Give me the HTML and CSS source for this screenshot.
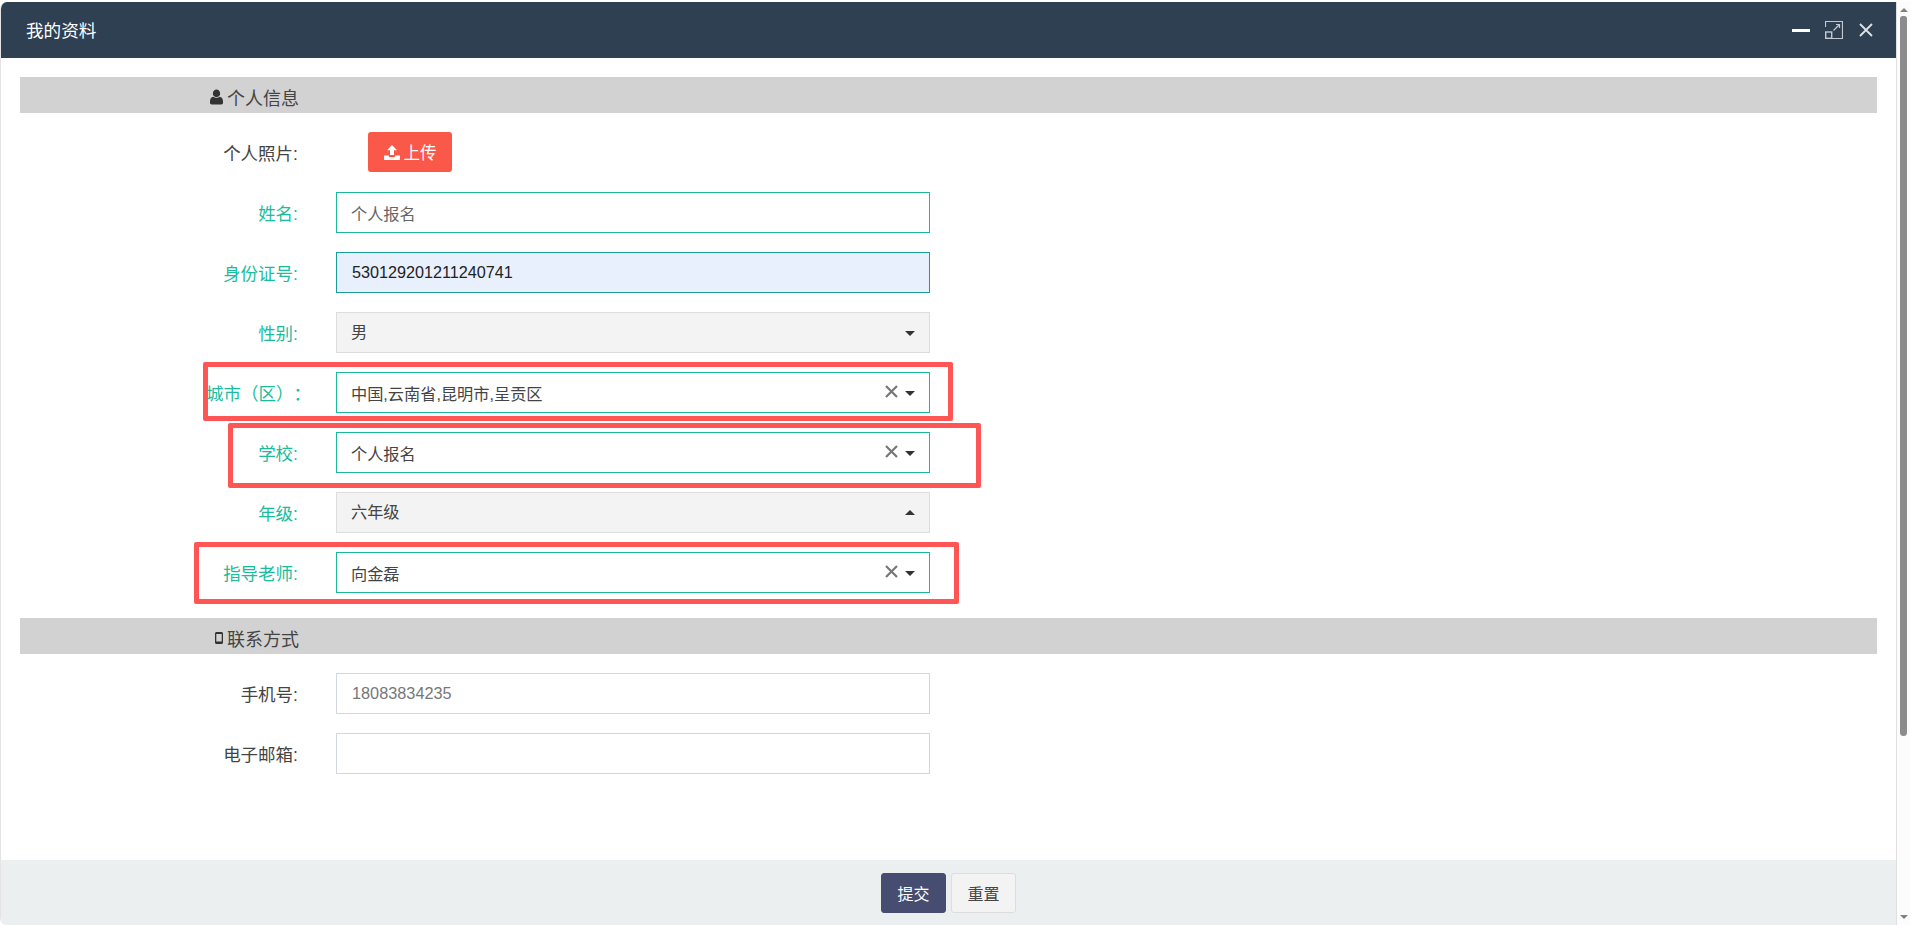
FILE: index.html
```html
<!DOCTYPE html>
<html lang="zh-CN">
<head>
<meta charset="utf-8">
<title>我的资料</title>
<link rel="stylesheet" href="styles.css">
</head>
<body>
<div class="page">
  <div class="dialog">
    <header class="titlebar">
      <span class="title">我的资料</span>
      <div class="win-tools">
        <span class="min-bar"></span>
        <svg class="win-icon" viewBox="0 0 18 18"><path d="M.5 6V.5h17v17H6M11 3.5h3.5V7M14.5 3.5 8.5 9.5" fill="none" stroke="#c3c9d0" stroke-width="1.2"/><rect x=".7" y="11" width="6" height="6.3" fill="none" stroke="#c3c9d0" stroke-width="1.4"/></svg>
        <svg class="win-close" viewBox="0 0 14 14"><path d="M1 1l12 12M13 1 1 13" fill="none" stroke="#dfe3e8" stroke-width="1.8"/></svg>
      </div>
    </header>
    <main class="content">
      <div class="section">
        <div class="section-title">
          <svg class="ic-user" viewBox="0 0 14 16"><path d="M7 0a3.900 3.900 0 0 1 3.900 4.100A3.900 3.900 0 0 1 7 8.200a3.900 3.900 0 0 1-3.900-4.100A3.900 3.900 0 0 1 7 0zM3.600 7.800C4.500 8.600 5.600 9 7 9s2.500-.4 3.400-1.200C12.800 8.100 14 10 14 13v1.300c0 1-.8 1.700-1.800 1.700H1.800C.8 16 0 15.300 0 14.300V13c0-3 1.200-4.900 3.600-5.200z" fill="#333"/></svg>个人信息
        </div>
      </div>
      <div class="row row-upload">
        <label class="lab">个人照片:</label>
        <button class="btn-upload"><svg class="ic-upload" viewBox="0 0 16 15"><path d="M8 0l5 5.200H10v4.800H6V5.200H3zM0 10.500h4.800v.8c0 .5.400.9.900.9h4.600c.5 0 .9-.4.900-.9v-.8H16v3.500c0 .6-.4 1-1 1H1c-.6 0-1-.4-1-1z" fill="#fff"/></svg>上传</button>
      </div>
      <div class="row">
        <label class="lab req">姓名:</label>
        <div class="field ok muted">个人报名</div>
      </div>
      <div class="row">
        <label class="lab req">身份证号:</label>
        <div class="field ok filled">530129201211240741</div>
      </div>
      <div class="row">
        <label class="lab req">性别:</label>
        <div class="field off">男<span class="tools"><span class="caret"></span></span></div>
      </div>
      <div class="row">
        <label class="lab req">城市（区）：</label>
        <div class="field ok">中国,云南省,昆明市,呈贡区<span class="tools"><svg class="ic-x" viewBox="0 0 13 13"><path d="M1 1l11 11M12 1 1 12" fill="none" stroke="#777" stroke-width="2.200"/></svg><span class="caret"></span></span></div>
      </div>
      <div class="row">
        <label class="lab req">学校:</label>
        <div class="field ok">个人报名<span class="tools"><svg class="ic-x" viewBox="0 0 13 13"><path d="M1 1l11 11M12 1 1 12" fill="none" stroke="#777" stroke-width="2.200"/></svg><span class="caret"></span></span></div>
      </div>
      <div class="row">
        <label class="lab req">年级:</label>
        <div class="field off">六年级<span class="tools"><span class="caret up"></span></span></div>
      </div>
      <div class="row">
        <label class="lab req">指导老师:</label>
        <div class="field ok">向金磊<span class="tools"><svg class="ic-x" viewBox="0 0 13 13"><path d="M1 1l11 11M12 1 1 12" fill="none" stroke="#777" stroke-width="2.200"/></svg><span class="caret"></span></span></div>
      </div>
      <div class="section section-2">
        <div class="section-title">
          <svg class="ic-phone" viewBox="0 0 8 12"><path fill-rule="evenodd" d="M1.500 0h5C7.300 0 8 .7 8 1.500v9C8 11.300 7.300 12 6.500 12h-5C.7 12 0 11.300 0 10.500v-9C0 .7.700 0 1.500 0zM1.300 2v7.600h5.400V2z" fill="#333"/></svg>联系方式
        </div>
      </div>
      <div class="row">
        <label class="lab">手机号:</label>
        <div class="field plain muted latin">18083834235</div>
      </div>
      <div class="row">
        <label class="lab">电子邮箱:</label>
        <div class="field plain"></div>
      </div>
    </main>
    <footer class="footer">
      <button class="btn btn-primary">提交</button>
      <button class="btn btn-default">重置</button>
    </footer>
  </div>
  <div class="scrollbar">
    <span class="arrow-up"></span>
    <span class="thumb"></span>
    <span class="arrow-down"></span>
  </div>
</div>
<div class="mark mark-city"></div>
<div class="mark mark-school"></div>
<div class="mark mark-teacher"></div>
</body>
</html>
```
FILE: styles.css
```css
* { box-sizing: border-box; }
html, body { margin: 0; height: 925px; overflow: hidden; background: #fff; }
body {
  position: relative;
  font-family: "Liberation Sans", "Noto Sans CJK SC", Arial, sans-serif;
  font-size: 16px;
  color: #444;
}
.page { display: flex; height: 925px; padding-top: 2px; }
.dialog {
  width: 1897px;
  display: flex;
  flex-direction: column;
  border-left: 1px solid #e4e4e4;
  border-right: 1px solid #e0e0e0;
  border-radius: 7px 0 0 7px;
  overflow: hidden;
}
.titlebar {
  height: 56px;
  flex: none;
  background: #2f4053;
  color: #fff;
  display: flex;
  align-items: center;
  padding: 0 23px 2px 25px;
}
.title { font-size: 17.600px; }
.win-tools { margin-left: auto; display: flex; align-items: center; }
.min-bar { width: 18px; height: 3px; background: #fff; margin-right: 15px; margin-top: 2px; }
.win-icon { width: 18px; height: 18px; margin-right: 16px; display: block; margin-top: 2px; }
.win-close { width: 14px; height: 14px; display: block; margin-top: 2px; }
.content { flex: 1; padding: 19px 19px 0; }
.section { height: 36px; background: #d2d2d2; display: flex; align-items: center; padding-left: 187px; }
.section-2 { margin-top: 25px; }
.section-title {
  width: 92px;
  font-size: 18px;
  color: #444;
  white-space: nowrap;
  display: flex;
  justify-content: flex-end;
  align-items: center;
  padding-top: 4px;
}
.ic-user { width: 13px; height: 16px; margin-right: 4px; margin-left: 1px; flex: none; }
.ic-phone { width: 8px; height: 12px; margin-right: 4px; flex: none; }
.row {
  display: flex;
  align-items: center;
  height: 41px;
  margin-top: 19px;
  padding-left: 186px;
}
.row-upload { height: 40px; margin-bottom: 20px; }
.row-upload + .row { margin-top: 0; }
.lab {
  width: 92px;
  flex: none;
  text-align: right;
  white-space: nowrap;
  font-size: 17.500px;
  color: #444;
  margin-right: 38px;
  text-spacing-trim: space-all;
}
.req { color: #1abc9c; }
.field {
  width: 594px;
  height: 41px;
  display: flex;
  align-items: center;
  padding: 0 14px;
  border: 1px solid #ddd;
  font-size: 16.200px;
  color: #444;
}
.ok { border-color: #1ab99b; }
.plain { border-color: #d2d6de; }
.muted { color: #666; }
.latin { color: #777; font-size: 16.300px; padding-left: 15px; }
.filled { background: #e8f0fe; color: #222; border-color: #1a9c9b; padding-left: 15px; }
.off { background: #f3f3f3; border-color: #ddd; padding-bottom: 3px; }
.tools { margin-left: auto; display: flex; align-items: center; }
.ic-x { width: 13px; height: 13px; display: block; margin-right: 7px; margin-top: -3px; }
.caret {
  width: 0;
  height: 0;
  border-left: 5px solid transparent;
  border-right: 5px solid transparent;
  border-top: 5px solid #333;
  margin-top: 1px;
}
.off .caret { margin-top: 4px; }
.off .caret.up { border-top: 0; border-bottom: 5px solid #333; margin-top: 2px; }
.btn-upload {
  margin-left: 32px;
  width: 84px;
  height: 40px;
  border: 0;
  border-radius: 3px;
  background: #fa5848;
  color: #fff;
  font: inherit;
  font-size: 16.500px;
  display: flex;
  align-items: center;
  justify-content: center;
  padding: 0;
}
.ic-upload { width: 16px; height: 15px; margin-right: 4px; }
.footer {
  flex: none;
  height: 65px;
  background: #ebeff0;
  display: flex;
  justify-content: center;
  align-items: flex-start;
  gap: 5px;
  padding-top: 13px;
}
.btn {
  width: 65px;
  height: 40px;
  border-radius: 3px;
  font: inherit;
  font-size: 16px;
  padding: 0;
}
.btn-primary { background: #464d70; border: 1px solid #464d70; color: #fff; }
.btn-default { background: #f3f3f3; border: 1px solid #ddd; color: #444; }
.scrollbar {
  width: 17px;
  flex: none;
  background: #fcfcfc;
  border-right: 4px solid #fff;
  display: flex;
  flex-direction: column;
  align-items: center;
  padding-top: 6px;
}
.arrow-up { width: 0; height: 0; border-left: 4px solid transparent; border-right: 4px solid transparent; border-bottom: 4px solid #808080; }
.thumb { width: 7px; height: 720px; margin-top: 4px; background: #8c8c8c; border-radius: 3px 3px 4px 4px; }
.arrow-down { width: 0; height: 0; margin-top: auto; margin-bottom: 6px; border-left: 4px solid transparent; border-right: 4px solid transparent; border-top: 4px solid #808080; }
.mark { position: absolute; border: 5px solid #ff5555; border-radius: 2px; pointer-events: none; }
.mark-city { left: 203px; top: 362px; width: 750px; height: 59px; }
.mark-school { left: 228px; top: 423px; width: 753px; height: 65px; }
.mark-teacher { left: 194px; top: 542px; width: 765px; height: 62px; }
```
